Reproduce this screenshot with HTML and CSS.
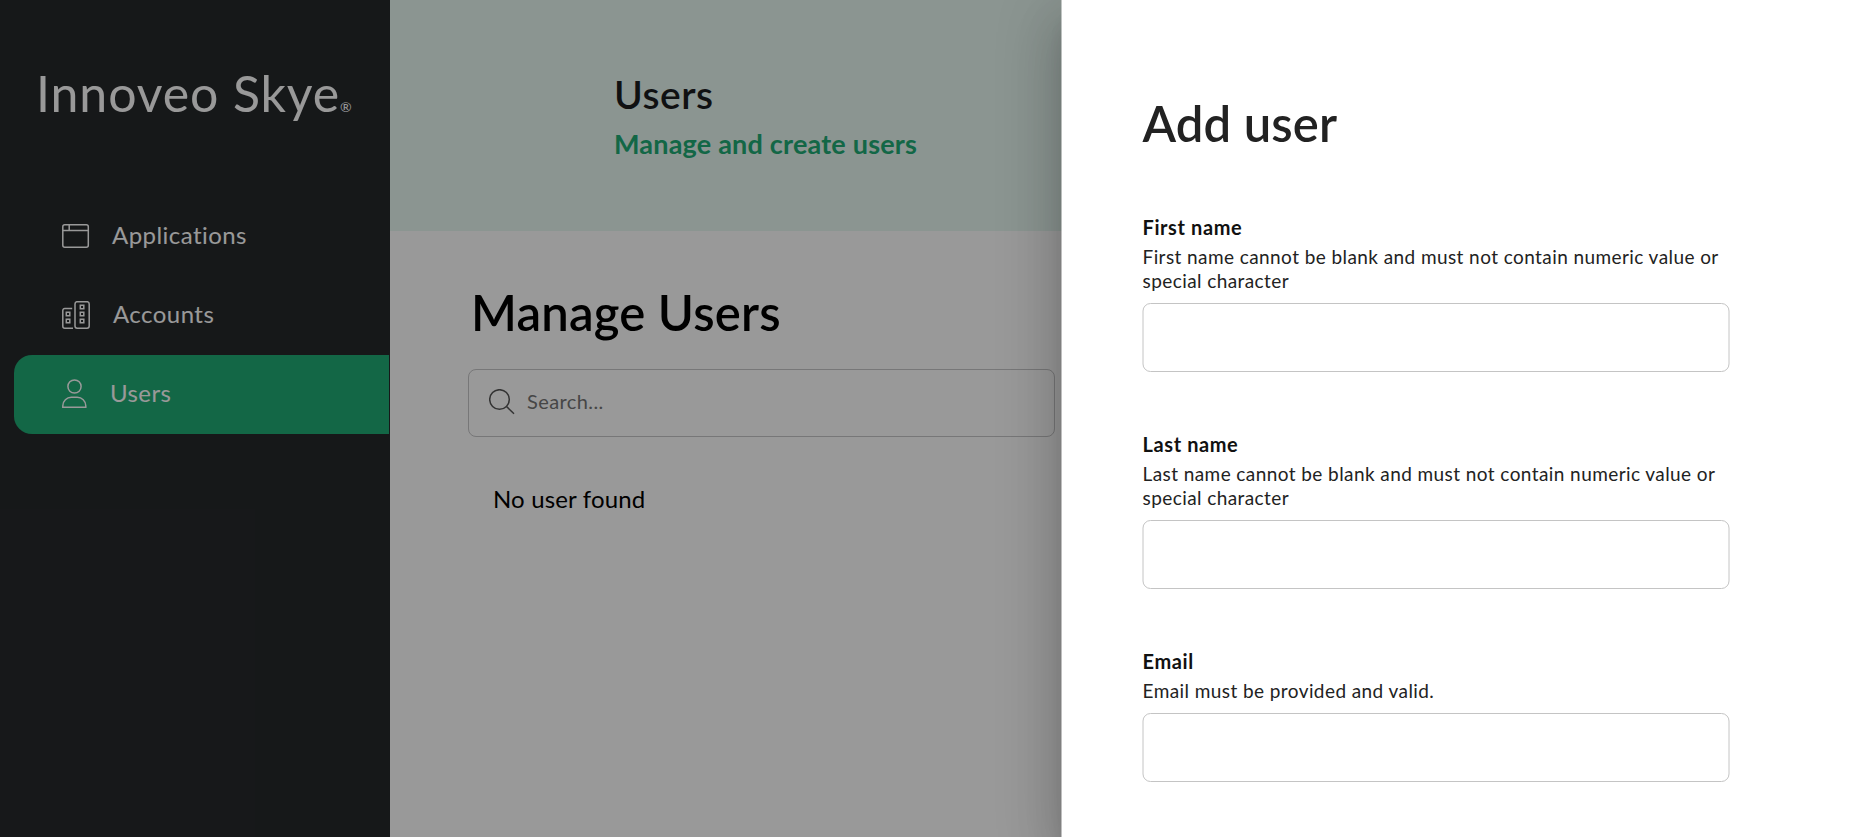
FILE: index.html
```html
<!DOCTYPE html>
<html lang="en">
<head>
<meta charset="utf-8">
<title>Innoveo Skye - Users</title>
<link rel="stylesheet" href="styles.css">
</head>
<body>
<div class="app">
  <aside class="sidebar">
    <div class="logo"><span class="logo-name">Innoveo Skye</span><span class="logo-mark">®</span></div>
    <nav class="nav">
      <a class="nav-item">
        <svg class="nav-icon" width="28" height="28" viewBox="0 0 28 28"><rect x=".8" y="2.7" width="25.5" height="22.6" rx="2"/><path d="M.8 8.500h25.500M7.200 2.700v5.800"/></svg>
        <span class="nav-label">Applications</span>
      </a>
      <a class="nav-item">
        <svg class="nav-icon" width="29" height="28" viewBox="0 0 29 28"><path d="M10.200 7.400H2.800a2 2 0 0 0-2 2v15.800a2 2 0 0 0 2 2h8.200"/><rect x="13" y=".7" width="14.200" height="26.500" rx="2.200"/><path d="M4.300 11.300h3.500v3.500h-3.500zM4.300 18.300h3.500v3.500h-3.500zM18.300 4.300h3.500v3.500h-3.500zM18.300 11.300h3.500v3.500h-3.500zM18.300 18.300h3.500v3.500h-3.500z"/></svg>
        <span class="nav-label">Accounts</span>
      </a>
      <a class="nav-item nav-item-active">
        <svg class="nav-icon" width="26" height="30" viewBox="0 0 26 30"><circle cx="12.500" cy="7.500" r="6.600"/><path d="M.8 28.300v-1.500c0-5 4-8.500 8.500-8.500h6c4.500 0 8.500 3.500 8.500 8.500v1.500z"/></svg>
        <span class="nav-label">Users</span>
      </a>
    </nav>
  </aside>
  <main class="main">
    <header class="hero">
      <h1 class="hero-title">Users</h1>
      <p class="hero-subtitle">Manage and create users</p>
    </header>
    <section class="content">
      <h2 class="content-title">Manage Users</h2>
      <div class="search">
        <svg class="search-icon" width="26" height="26" viewBox="0 0 26 26"><circle cx="10.500" cy="10.500" r="9.800"/><path d="M17.500 17.500l7.500 7.300"/></svg>
        <span class="search-text">Search...</span>
      </div>
      <p class="empty">No user found</p>
    </section>
  </main>
</div>
<div class="overlay"></div>
<aside class="drawer">
  <h2 class="drawer-title">Add user</h2>
  <div class="field">
    <label class="field-label">First name</label>
    <p class="field-hint">First name cannot be blank and must not contain numeric value or special character</p>
    <div class="field-input"></div>
  </div>
  <div class="field">
    <label class="field-label">Last name</label>
    <p class="field-hint">Last name cannot be blank and must not contain numeric value or special character</p>
    <div class="field-input"></div>
  </div>
  <div class="field">
    <label class="field-label">Email</label>
    <p class="field-hint">Email must be provided and valid.</p>
    <div class="field-input"></div>
  </div>
</aside>
</body>
</html>
```
FILE: styles.css
```css
* { box-sizing: border-box; }
html { height: 100%; overflow: hidden; }
body { position: relative; margin: 0; height: 100%; overflow: hidden; font-family: Lato, sans-serif; font-variant-ligatures: none; background: #fff; }
h1, h2, p { margin: 0; }
svg { display: block; fill: none; }

.app { display: flex; height: 100%; }
.sidebar { width: 390px; background: #26282b; color: #fff; padding: 63px 1px 0 14px; }
.logo { height: 134px; padding-left: 22px; display: flex; align-items: baseline; font-size: 50px; line-height: 60px; letter-spacing: .9px; white-space: nowrap; }
.logo-mark { font-size: 14px; letter-spacing: 0; }
.nav-item { display: flex; align-items: center; height: 79px; padding: 0 0 1px 48px; border-radius: 18px 0 0 18px; }
.nav-item-active { background: #20ac76; }
.nav-icon { flex: none; stroke: #fff; stroke-width: 1.500; }
.nav-label { font-size: 24px; line-height: 30px; margin: 0 0 3px 22px; letter-spacing: .45px; }

.main { flex: 1; }
.hero { height: 231px; background: #e8f8f2; padding: 71px 0 0 224px; }
.hero-title { font-size: 39px; line-height: 47px; font-weight: 600; letter-spacing: .5px; color: #1c1d1f; }
.hero-subtitle { font-size: 27px; line-height: 34px; margin-top: 9px; font-weight: 700; letter-spacing: .2px; color: #20ac76; }
.content { padding: 51px 0 0 78px; }
.content-title { font-size: 49px; line-height: 60px; padding-left: 3px; font-weight: 600; letter-spacing: .2px; }
.search { display: flex; align-items: center; width: 587px; height: 68px; margin-top: 27px; padding: 0 20px 2px; border: 1px solid #c6c6c8; border-radius: 8px; }
.search-icon { stroke: #555; stroke-width: 1.500; }
.search-text { font-size: 20px; margin: 0 0 2px 12px; letter-spacing: .4px; color: #757575; }
.empty { margin: 47px 0 0 25px; font-size: 24px; line-height: 30px; letter-spacing: .15px; }

.overlay { position: absolute; inset: 0; background: rgba(0, 0, 0, .4); }
.drawer { position: absolute; top: 0; right: 0; width: 789px; height: 100%; padding: 93px 0 0 81px; background: #fff; box-shadow: 0 16px 20px -10px rgba(0, 0, 0, .2), 0 32px 48px 4px rgba(0, 0, 0, .14), 0 12px 60px 10px rgba(0, 0, 0, .12); transform: translateX(.5px); color: #222; }
.drawer-title { font-size: 49px; line-height: 60px; font-weight: 600; letter-spacing: .15px; }
.field { width: 587px; margin-bottom: 59px; }
.drawer-title + .field { margin-top: 61px; }
.field-label { display: block; font-size: 20px; line-height: 26px; font-weight: 700; letter-spacing: .6px; color: #111; }
.field-hint { font-size: 19px; line-height: 24px; margin-top: 5px; letter-spacing: .42px; }
.field-input { height: 69px; margin-top: 10px; border: 1px solid #c4c4c4; border-radius: 8px; }
```
